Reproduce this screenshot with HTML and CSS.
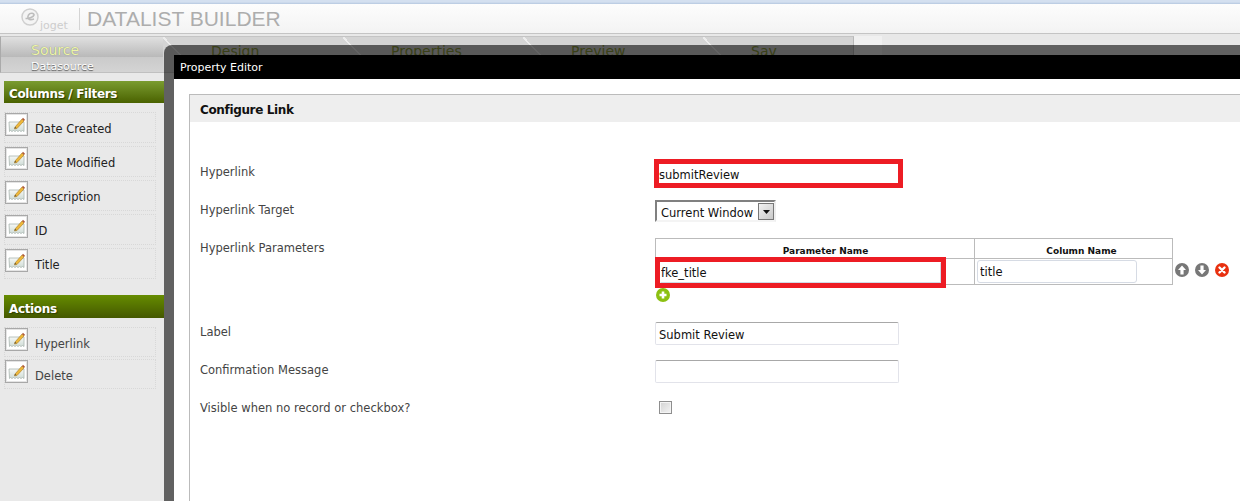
FILE: index.html
```html
<!DOCTYPE html>
<html lang="en">
<head>
<meta charset="utf-8">
<title>Datalist Builder</title>
<link rel="stylesheet" href="styles.css">
</head>
<body>
<svg class="defs" width="0" height="0" aria-hidden="true">
  <defs>
    <linearGradient id="paper" x1="0" y1="0" x2="0" y2="1">
      <stop offset="0" stop-color="#f6f8f6"/>
      <stop offset="1" stop-color="#cfdcd6"/>
    </linearGradient>
    <symbol id="edit" viewBox="0 0 23 23">
      <rect x="0.5" y="0.5" width="22" height="22" fill="#fff" stroke="#a8a8a8"/>
      <rect x="1.5" y="1.500" width="20" height="20" fill="none" stroke="#e4e4e4"/>
      <path d="M4 9h15v9.500l-1.500-1-1.500 1-1.500-1-1.500 1-1.500-1-1.500 1-1.500-1-1.500 1-1.500-1-1 1z" fill="url(#paper)" stroke="#a9b5b0" stroke-width=".8"/>
      <path d="M10 14l7-8 2 2-7 7.500-2.500.5z" fill="#eeb83a" stroke="#a77b22" stroke-width=".6"/>
      <path d="M17 6l1-1.200 2 2-1 1.200z" fill="#b05a3a"/>
      <path d="M10 14l-.5 1.500 2-.5z" fill="#444"/>
    </symbol>
    <symbol id="up" viewBox="0 0 14 14">
      <circle cx="7" cy="7" r="7" fill="#777"/>
      <path d="M7 2.500l4 4.500H8.600v4.500H5.400V7H3z" fill="#fff"/>
    </symbol>
    <symbol id="down" viewBox="0 0 14 14">
      <circle cx="7" cy="7" r="7" fill="#777"/>
      <path d="M7 11.500L3 7h2.400V2.500h3.200V7H11z" fill="#fff"/>
    </symbol>
    <symbol id="remove" viewBox="0 0 14 14">
      <circle cx="7" cy="7" r="7" fill="#e8300f"/>
      <path d="M4.500 4.500l5 5m0-5l-5 5" stroke="#fff" stroke-width="2.400" stroke-linecap="round"/>
    </symbol>
    <symbol id="add" viewBox="0 0 14 14">
      <circle cx="7" cy="7" r="7" fill="#8cc012"/>
      <path d="M7 3.500v7M3.500 7h7" stroke="#fff" stroke-width="2.600"/>
    </symbol>
  </defs>
</svg>

<div class="page">
  <div class="topstrip"></div>
  <header class="header">
    <div class="logo">
      <svg class="logo-mark" width="18" height="18" viewBox="0 0 18 18" aria-hidden="true">
        <circle cx="9" cy="9" r="8" fill="#f4f4f4" stroke="#cfcfcf" stroke-width="1.500"/>
        <path d="M4.500 10.500c4 0 8-1.500 8.500-3.500s-4-2.500-5.500 0-.5 6 5.500 4" fill="none" stroke="#bdbdbd" stroke-width="1.600"/>
      </svg>
      <span class="logo-text">joget</span>
    </div>
    <h1 class="title">DATALIST BUILDER</h1>
  </header>

  <nav class="tabs">
    <div class="tab tab-first">
      <span class="tab-name">Source</span>
      <span class="tab-sub">Datasource</span>
    </div>
    <div class="tab"><span class="tab-name">Design</span></div>
    <div class="tab"><span class="tab-name">Properties</span></div>
    <div class="tab"><span class="tab-name">Preview</span></div>
    <div class="tab tab-last"><span class="tab-name">Sav</span></div>
    <div class="tab-rest"></div>
  </nav>

  <aside class="sidebar">
    <h2 class="group-title">Columns / Filters</h2>
    <ul class="items">
      <li class="item"><svg class="item-icon"><use href="#edit"/></svg><span>Date Created</span></li>
      <li class="item"><svg class="item-icon"><use href="#edit"/></svg><span>Date Modified</span></li>
      <li class="item"><svg class="item-icon"><use href="#edit"/></svg><span>Description</span></li>
      <li class="item"><svg class="item-icon"><use href="#edit"/></svg><span>ID</span></li>
      <li class="item"><svg class="item-icon"><use href="#edit"/></svg><span>Title</span></li>
    </ul>
    <h2 class="group-title group-actions">Actions</h2>
    <ul class="items items-actions">
      <li class="item"><svg class="item-icon"><use href="#edit"/></svg><span>Hyperlink</span></li>
      <li class="item"><svg class="item-icon"><use href="#edit"/></svg><span>Delete</span></li>
    </ul>
  </aside>

  <div class="overlay">
    <section class="dialog">
      <div class="dialog-title">Property Editor</div>
      <div class="dialog-body">
        <div class="panel">
          <h3 class="panel-title">Configure Link</h3>
          <form class="form">
            <div class="row row-link">
              <label class="label label-link">Hyperlink</label>
              <input class="input input-link marked" type="text" value="submitReview">
            </div>
            <div class="row row-target">
              <label class="label">Hyperlink Target</label>
              <div class="select">
                <span class="select-value">Current Window</span>
                <span class="select-btn"><svg width="7" height="4" viewBox="0 0 7 4"><path d="M0 0h7L3.500 4z" fill="#111"/></svg></span>
              </div>
            </div>
            <div class="row row-params">
              <label class="label">Hyperlink Parameters</label>
              <div class="params">
                <div class="params-line">
                  <table class="table">
                    <thead>
                      <tr><th class="col-name">Parameter Name</th><th class="col-col">Column Name</th></tr>
                    </thead>
                    <tbody>
                      <tr>
                        <td><input class="input input-param marked" type="text" value="fke_title"></td>
                        <td><input class="input input-col" type="text" value="title"></td>
                      </tr>
                    </tbody>
                  </table>
                  <div class="row-actions">
                    <svg class="act"><use href="#up"/></svg>
                    <svg class="act"><use href="#down"/></svg>
                    <svg class="act"><use href="#remove"/></svg>
                  </div>
                </div>
                <svg class="act act-add"><use href="#add"/></svg>
              </div>
            </div>
            <div class="row row-label">
              <label class="label">Label</label>
              <input class="input input-wide" type="text" value="Submit Review">
            </div>
            <div class="row row-confirm">
              <label class="label">Confirmation Message</label>
              <input class="input input-wide" type="text" value="">
            </div>
            <div class="row">
              <label class="label">Visible when no record or checkbox?</label>
              <span class="checkbox"></span>
            </div>
          </form>
        </div>
      </div>
    </section>
  </div>
</div>
</body>
</html>
```
FILE: styles.css
```css
* { box-sizing: border-box; }
html, body { margin: 0; padding: 0; }
body {
  font-family: "DejaVu Sans", Verdana, sans-serif;
  font-size: 11.5px;
  color: #333;
  background: #fff;
  overflow: hidden;
}
.defs { position: absolute; }
.page {
  position: relative;
  width: 1240px;
  height: 501px;
  overflow: hidden;
  background: #e8e8e8;
}
.topstrip {
  height: 4px;
  background: linear-gradient(#d4e0f0, #d4e0f0 2px, #b5c8e0);
}

/* header */
.header {
  height: 30px;
  display: flex;
  align-items: center;
  padding-left: 21px;
  background: linear-gradient(#fdfdfd, #f3f3f3);
  border-bottom: 1px solid #c4c4c4;
}
.logo {
  display: flex;
  width: 59px;
  height: 22px;
  border-right: 1px solid #d4d4d4;
  margin-right: 7px;
}
.logo-mark { flex: none; }
.logo-text {
  font-family: "DejaVu Sans", Verdana, sans-serif;
  font-size: 11px;
  line-height: 11px;
  color: #cdcdcd;
  margin: 12px 0 0 1px;
}
.title {
  margin: 0;
  font-family: "Liberation Sans", Arial, sans-serif;
  font-size: 21px;
  font-weight: 400;
  color: #adadad;
  line-height: 26px;
}

/* tabs */
.tabs {
  display: flex;
  height: 39px;
  padding-top: 2px;
}
.tab {
  width: 180px;
  padding: 0 0 0 48px;
  background:
    linear-gradient(to top right, transparent 48.5%, #ececec 48.5%, #ececec 51.5%, transparent 51.5%) left top / 36px 37px no-repeat,
    #d4d4d4;
  border-top: 1px solid #c4c4c4;
  border-bottom: 1px solid #c0c0c0;
  line-height: 1;
}
.tab-first {
  width: 163px;
  padding-left: 30px;
  background: linear-gradient(#e0e0e0, #b9b9b9 57%, #cacaca 57%, #d4d4d4);
  border-left: 1px solid #aaa;
}
.tab-last {
  width: 151px;
  border-right: 1px solid #b8b8b8;
}
.tab-rest {
  width: 28px;
  background: #f0f0f0;
}
.tab-name {
  display: block;
  margin-top: 5px;
  font-size: 14px;
  line-height: 18px;
  color: #8a9a3a;
}
.tab-first .tab-name {
  margin-top: 4px;
  color: #eef6a8;
  text-shadow: 0 0 1px #777;
}
.tab-sub {
  display: block;
  margin-top: 1px;
  font-size: 11px;
  line-height: 14px;
  color: #fff;
  text-shadow: 0 1px 1px #555;
}

/* sidebar */
.sidebar {
  width: 164px;
  height: 428px;
  padding: 8px 0 0 4px;
  background: #e9e9e9;
}
.group-title {
  margin: 0;
  height: 22px;
  padding-left: 5px;
  font-size: 12px;
  letter-spacing: -0.35px;
  line-height: 27px;
  font-weight: 700;
  color: #fff;
  text-shadow: 1px 1px 1px #2f3f00;
  background: linear-gradient(#7a9c30, #4a6200);
}
.group-actions {
  height: 23px;
  margin-top: 16px;
  line-height: 29px;
  background: linear-gradient(#668c00, #445800);
}
.items {
  list-style: none;
  margin: 9px 0 0;
  padding: 0;
  width: 152px;
  display: flex;
  flex-direction: column;
  gap: 3px;
}
.items-actions { gap: 2px; }
.item {
  height: 31px;
  display: flex;
  align-items: flex-start;
  gap: 7px;
  border: 1px dotted #d8d8d8;
  color: #222;
}
.items-actions .item { height: 30px; color: #444; }
.item-icon {
  width: 23px;
  height: 23px;
  flex: none;
}
.item span { margin-top: 9px; line-height: 15px; }

/* modal overlay */
.overlay {
  position: absolute;
  left: 164px;
  top: 45px;
  right: 0;
  bottom: 0;
  padding: 10px 0 0 10px;
  background: rgba(0, 0, 0, 0.58);
  border-top-left-radius: 8px;
}
.dialog {
  height: 100%;
  display: flex;
  flex-direction: column;
}
.dialog-title {
  height: 24px;
  padding-left: 6px;
  font-size: 11px;
  line-height: 25px;
  color: #fff;
  background: #000;
}
.dialog-body {
  flex: 1;
  padding: 15px 0 0 15px;
  background: #fff;
}
.panel {
  height: 100%;
  border-left: 1px solid #bbb;
  border-top: 1px solid #bbb;
}
.panel-title {
  margin: 0;
  height: 27px;
  padding-left: 10px;
  font-size: 12px;
  letter-spacing: -0.35px;
  line-height: 30px;
  font-weight: 700;
  color: #111;
  background: #eee;
}
.form { padding: 37px 0 0 10px; }
.row {
  display: grid;
  grid-template-columns: 455px 1fr;
  align-items: start;
}
.label {
  display: block;
  padding-top: 3px;
  line-height: 14px;
  color: #444;
}
.label-link { padding-top: 6px; }
.row-link { height: 41px; }
.row-target { height: 38px; }
.row-params { height: 84px; }
.row-label { height: 38px; }
.row-confirm { height: 38px; }

.input {
  display: block;
  font: inherit;
  color: #111;
  background: #fff;
  border: 1px solid #e2e3ea;
  border-top-color: #a8a8a8;
  border-radius: 2px;
  padding: 2px 3px 0;
  outline: none;
}
.input-wide { width: 244px; height: 23px; }
.marked {
  outline: 5px solid #ed1c24;
  border-radius: 0;
}
.input-link {
  width: 239px;
  height: 19px;
  margin: 5px 0 0 4px;
  padding: 2px 0 0;
  border: 0;
}

.select {
  display: flex;
  align-items: center;
  width: 121px;
  height: 22px;
  padding-top: 1px;
  border: 2px solid #808080;
  border-right-color: #eee;
  border-bottom-color: #f4f4f4;
  color: #111;
}
.select-value { flex: 1; padding: 2px 0 0 4px; white-space: nowrap; }
.select-btn {
  width: 16px;
  height: 17px;
  display: flex;
  align-items: center;
  justify-content: center;
  background: linear-gradient(135deg, #f2f2f2, #c8c8c8);
  border: 1px solid #777;
}

.params-line { display: flex; }
.table {
  width: 518px;
  border-collapse: collapse;
  table-layout: fixed;
}
.table th, .table td {
  border: 1px solid #bbb;
  padding: 0;
}
.table th {
  height: 20px;
  font-size: 9px;
  font-weight: 700;
  color: #111;
  padding-top: 4px;
}
.table td { height: 26px; }
.table .col-name { width: 319px; padding-left: 21px; }
.table .col-col { padding-left: 16px; }
.input-param {
  width: 281px;
  height: 21px;
  margin: 2px 0 0 4px;
  padding: 1px 0 0;
  border-color: #d0dbe6;
  border-top-color: #fff;
  border-left-color: #fff;
}
.input-col {
  width: 160px;
  height: 23px;
  margin-left: 2px;
  padding: 1px 2px 0;
  border-color: #d6dbe4;
  border-radius: 3px;
}
.row-actions {
  display: flex;
  gap: 6px;
  margin: 25px 0 0 2px;
}
.act { width: 14px; height: 14px; display: block; flex: none; }
.act-add { margin: 3px 0 0 1px; }

.checkbox {
  display: block;
  width: 13px;
  height: 13px;
  margin: 3px 0 0 4px;
  border: 1px solid #8e8e8e;
  box-shadow: inset 0 0 0 1px #f4f4f4;
  background: linear-gradient(135deg, #d2d2d2, #f4f4f4);
}
```
